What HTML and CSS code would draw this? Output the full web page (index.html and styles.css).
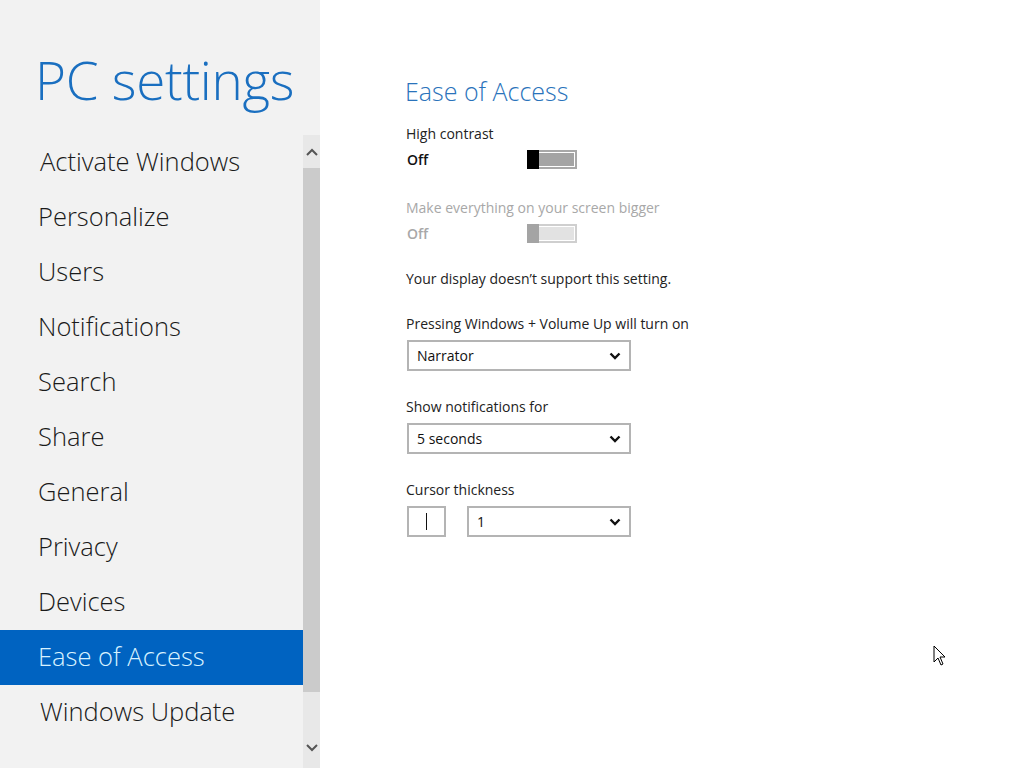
FILE: index.html
```html
<!DOCTYPE html>
<html lang="en">
<head>
    <meta charset="UTF-8">
    <title>PC settings</title>
    <link rel="stylesheet" href="styles.css">
</head>
<body>
    <div class="app">
        <div class="sidebar">
            <h1 class="title">PC settings</h1>
            <div class="nav-wrap">
                <ul class="nav">
                    <li class="nudge">Activate Windows</li>
                    <li>Personalize</li>
                    <li>Users</li>
                    <li>Notifications</li>
                    <li>Search</li>
                    <li>Share</li>
                    <li>General</li>
                    <li>Privacy</li>
                    <li>Devices</li>
                    <li class="active">Ease of Access</li>
                    <li class="nudge">Windows Update</li>
                </ul>
                <div class="scrollbar">
                    <div class="sb-btn">
                        <svg width="12" height="8" viewBox="0 0 12 8"><path d="M1 7 L6 2 L11 7" fill="none" stroke="#555" stroke-width="2"/></svg>
                    </div>
                    <div class="sb-thumb"></div>
                    <div class="sb-rest">
                        <svg width="12" height="8" viewBox="0 0 12 8"><path d="M1 1 L6 6 L11 1" fill="none" stroke="#555" stroke-width="2"/></svg>
                    </div>
                </div>
            </div>
        </div>

        <div class="content">
            <h2 class="heading">Ease of Access</h2>

            <div class="setting">
                <div class="label">High contrast</div>
                <div class="toggle-row">
                    <span class="state">Off</span>
                    <span class="toggle"><span class="knob"></span></span>
                </div>
            </div>

            <div class="setting disabled">
                <div class="label">Make everything on your screen bigger</div>
                <div class="toggle-row">
                    <span class="state">Off</span>
                    <span class="toggle"><span class="knob"></span></span>
                </div>
            </div>

            <p class="note">Your display doesn’t support this setting.</p>

            <div class="setting pick">
                <div class="label">Pressing Windows + Volume Up will turn on</div>
                <div class="select">Narrator
                    <svg width="12" height="8" viewBox="0 0 12 8"><path d="M1.5 1.5 L6 6 L10.5 1.5" fill="none" stroke="#111" stroke-width="2.4"/></svg>
                </div>
            </div>

            <div class="setting pick">
                <div class="label">Show notifications for</div>
                <div class="select">5 seconds
                    <svg width="12" height="8" viewBox="0 0 12 8"><path d="M1.5 1.5 L6 6 L10.5 1.5" fill="none" stroke="#111" stroke-width="2.4"/></svg>
                </div>
            </div>

            <div class="setting pick">
                <div class="label">Cursor thickness</div>
                <div class="cursor-row">
                    <div class="preview"><span class="caret"></span></div>
                    <div class="select small">1
                        <svg width="12" height="8" viewBox="0 0 12 8"><path d="M1.5 1.5 L6 6 L10.5 1.5" fill="none" stroke="#111" stroke-width="2.4"/></svg>
                    </div>
                </div>
            </div>
        </div>
    </div>

    <svg class="pointer" width="14" height="22" viewBox="0 0 14 22">
        <path d="M1 1 L1 17 L5 13 L8 20 L10 19 L7 12 L12 12 Z" fill="#fff" stroke="#000" stroke-width="1"/>
    </svg>
</body>
</html>
```

FILE: styles.css
```css
body {
    margin: 0;
    font-family: "Open Sans", "Noto Sans", sans-serif;
    background: #fff;
    overflow: hidden;
}
.app {
    display: flex;
    width: 1024px;
    height: 768px;
}
.sidebar {
    width: 320px;
    background: #f2f2f2;
    display: flex;
    flex-direction: column;
}
.title {
    margin: 0;
    height: 135px;
    box-sizing: border-box;
    padding: 45px 0 0 35px;
    font-size: 53px;
    font-weight: 300;
    line-height: 70px;
    color: #1a6fc0;
    letter-spacing: -0.3px;
}
.nav-wrap {
    flex: 1;
    display: flex;
}
.nav {
    list-style: none;
    margin: 0;
    padding: 0;
    width: 303px;
}
.nav li {
    height: 55px;
    line-height: 52px;
    padding-left: 38px;
    font-size: 25.5px;
    font-weight: 300;
    color: #1a1a1a;
}
.nav li.nudge { padding-left: 40px; }
.nav li.active {
    background: #0063c1;
    color: #d8f2ff;
}
.scrollbar {
    width: 17px;
    display: flex;
    flex-direction: column;
    background: #e8e8e8;
}
.sb-btn {
    height: 33px;
    display: flex;
    align-items: center;
    justify-content: center;
}
.sb-thumb {
    height: 524px;
    background: #cbcbcb;
}
.sb-rest {
    flex: 1;
    display: flex;
    align-items: flex-end;
    justify-content: center;
    padding-bottom: 16px;
}
.content {
    flex: 1;
    padding: 73px 0 0 85px;
}
.heading {
    margin: 0 0 15px;
    font-size: 25px;
    font-weight: 300;
    color: #2a73bb;
    line-height: 36px;
}
.setting { margin-bottom: 24px; }
.setting.pick { margin-bottom: 26px; }
.label {
    font-size: 14px;
    color: #222;
    line-height: 20px;
    padding-left: 1px;
}
.toggle-row {
    display: flex;
    align-items: center;
    height: 30px;
}
.state {
    width: 120px;
    padding-left: 2px;
    font-size: 14px;
    font-weight: 600;
    color: #111;
}
.toggle {
    width: 50px;
    height: 19px;
    box-sizing: border-box;
    border: 2px solid #a8a8a8;
    background: #a4a4a4;
    box-shadow: inset 0 0 0 1px #fff;
    position: relative;
}
.knob {
    position: absolute;
    left: -2px;
    top: -2px;
    width: 12px;
    height: 19px;
    background: #000;
}
.disabled .label, .disabled .state { color: #a8a8a8; }
.disabled .toggle { background: #e2e2e2; border-color: #cfcfcf; }
.disabled .knob { background: #a4a4a4; }
.note {
    margin: -3px 0 26px 1px;
    font-size: 14px;
    line-height: 19px;
    color: #222;
}
.select {
    width: 224px;
    height: 31px;
    box-sizing: border-box;
    border: 2px solid #b4b4b4;
    margin-left: 2px;
    margin-top: 6px;
    padding: 0 8px;
    display: flex;
    align-items: center;
    justify-content: space-between;
    font-size: 14px;
    color: #111;
}
.cursor-row {
    display: flex;
    gap: 21px;
    margin-top: 6px;
}
.preview {
    width: 39px;
    height: 31px;
    box-sizing: border-box;
    border: 2px solid #b4b4b4;
    margin-left: 2px;
    display: flex;
    align-items: center;
    justify-content: center;
}
.caret {
    width: 1px;
    height: 17px;
    background: #111;
}
.select.small {
    width: 164px;
    margin: 0;
}
.pointer {
    position: absolute;
    left: 933px;
    top: 645px;
}
```
